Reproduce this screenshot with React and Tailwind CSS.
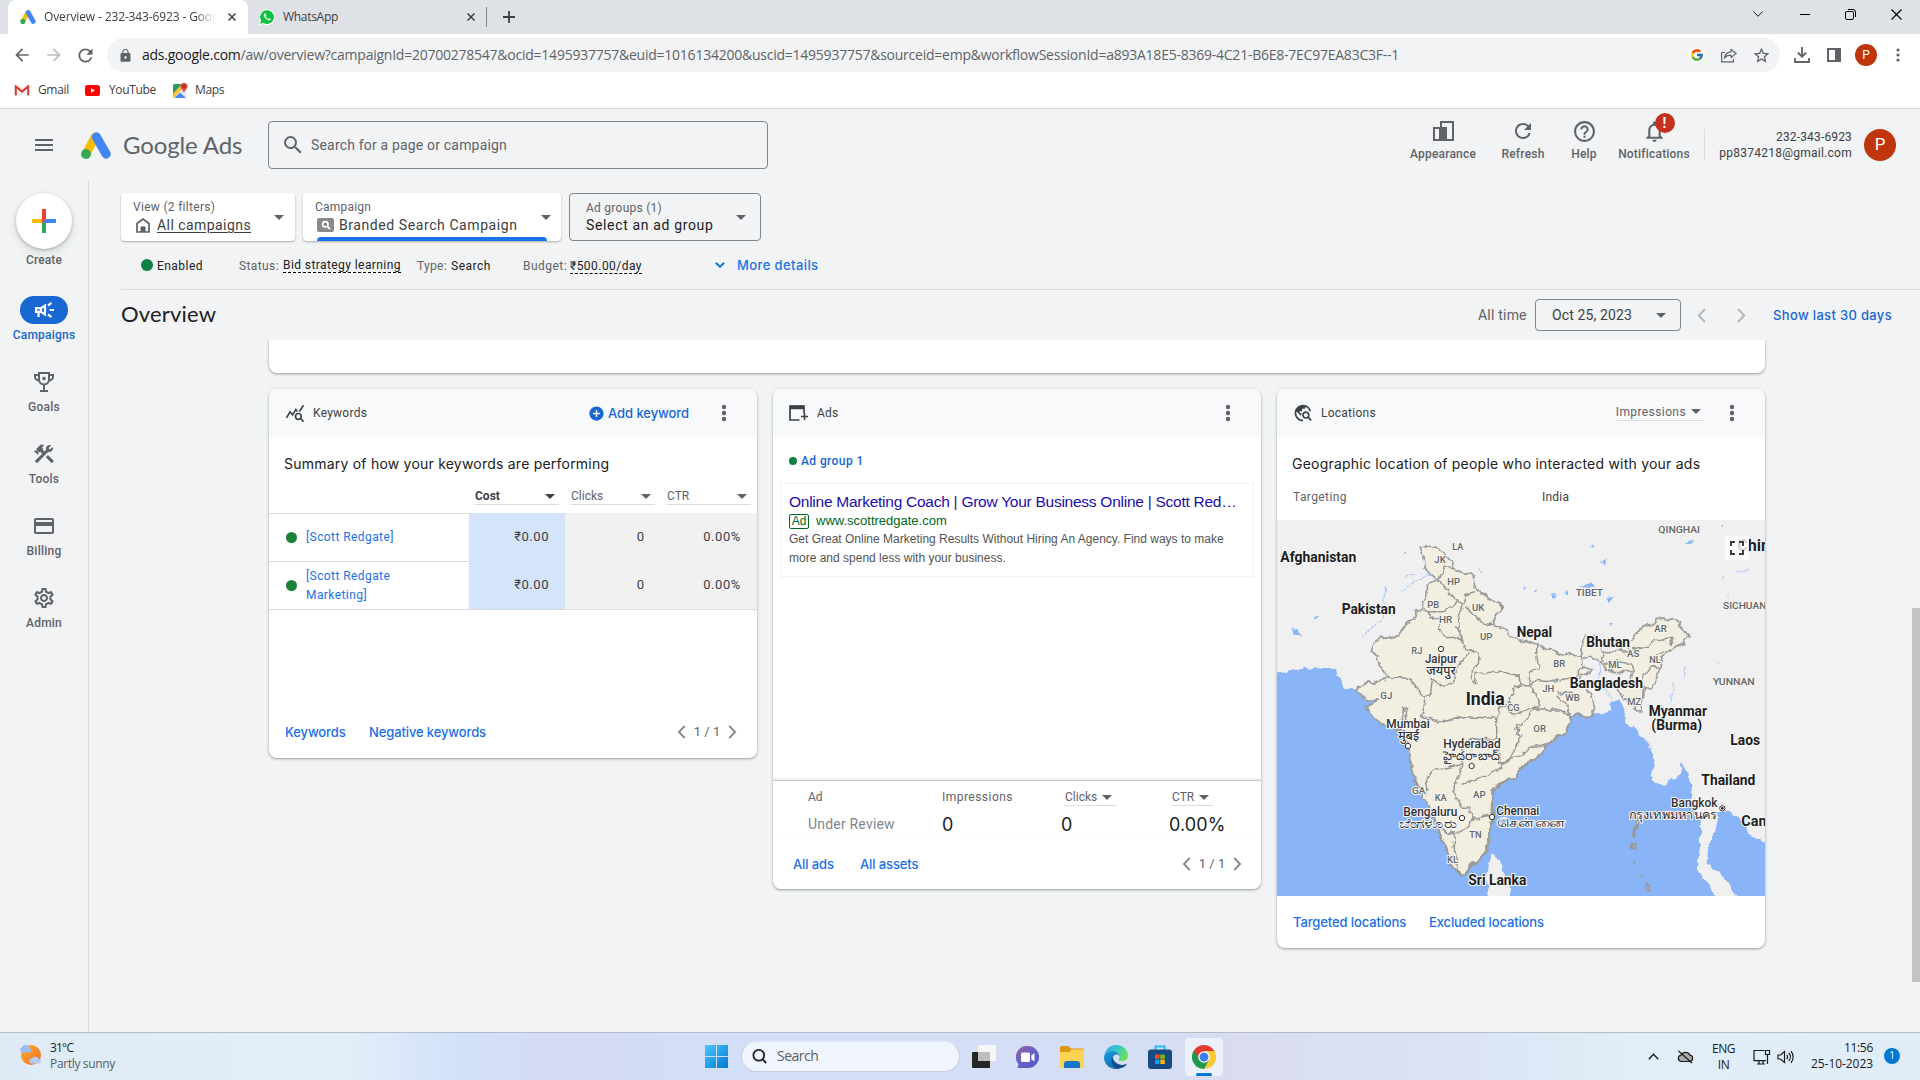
import React from 'react';
import {
  MdMenu, MdSearch, MdOutlineConstruction, MdCreditCard,
  MdOutlineSettings, MdRefresh, MdHelpOutline, MdNotificationsNone, MdQueryStats, MdTravelExplore,
  MdAddCircle, MdArrowBack, MdArrowForward, MdLock, MdStarBorder, MdFullscreen,
} from 'react-icons/md';
import { FcGoogle } from 'react-icons/fc';

const Caret = ({ className = '' }) => (
  <svg viewBox="0 0 10 5" className={`h-[5px] w-[10px] shrink-0 ${className}`}><path d="M0 0h10L5 5z" fill="currentColor" /></svg>
);

const Chevron = ({ dir, className = '' }) => (
  <svg viewBox="0 0 9 15" className={`shrink-0 ${className}`} fill="none" stroke="currentColor" strokeWidth="2">
    <path d={dir === 'left' ? 'M8 1 1.8 7.5 8 14' : 'M1 1l6.2 6.5L1 14'} />
  </svg>
);

const Dots = () => (
  <svg viewBox="0 0 6 18" className="h-[18px] w-[6px] shrink-0 text-[#5f6368]" fill="currentColor">
    <circle cx="3" cy="3" r="2.2" /><circle cx="3" cy="9" r="2.2" /><circle cx="3" cy="15" r="2.2" />
  </svg>
);

const AdsLogo = ({ className }) => (
  <svg viewBox="0 0 30 27" className={className} strokeLinecap="round">
    <path d="M5.2 21.8 14 5" stroke="#fbbc04" strokeWidth="8.6" />
    <path d="M15.4 4.9 25.1 22.1" stroke="#4285f4" strokeWidth="9.2" />
    <circle cx="5" cy="22" r="4.9" fill="#34a853" />
  </svg>
);

/* ---------- Browser chrome ---------- */

const TabClose = () => (
  <svg viewBox="0 0 8 8" className="h-2 w-2 shrink-0" stroke="#3c4043" strokeWidth="1.5"><path d="M.5.5l7 7M7.5.5l-7 7" /></svg>
);

function TabStrip() {
  return (
    <div className="flex h-[34px] shrink-0 bg-[#dee1e6] pl-2 text-xs text-[#3c4043] [font-family:'Open_Sans',sans-serif]">
      <div className="flex w-[240px] items-center rounded-t-lg bg-white pl-3">
        <AdsLogo className="h-[14px] w-4 shrink-0" />
        <span className="ml-2 w-[172px] overflow-hidden whitespace-nowrap tracking-[-0.13px] [mask-image:linear-gradient(to_right,black_88%,transparent)]">Overview - 232-343-6923 - Goog</span>
        <span className="ml-3"><TabClose /></span>
      </div>
      <div className="flex w-[238px] items-center pl-[11px]">
        <svg viewBox="0 0 16 16" className="h-4 w-4 shrink-0">
          <path d="M0 16l1.200-4.200A7.900 7.900 0 1 1 4.300 15z" fill="#fff" />
          <path d="M1.200 14.800l.9-3.200A6.900 6.900 0 1 1 4.500 14z" fill="#0fc143" />
          <path d="M5.600 4.300c-1.300.8-1.100 2.600.6 4.700 1.900 2.200 4 3.200 5.200 2.100.6-.6.5-1.100-.2-1.500-1.200-.7-1.400-.5-1.900.3-1-.3-2.100-1.300-2.600-2.500.7-.6.7-.9.3-1.900-.4-1-.8-1.300-1.400-1.200z" fill="#fff" />
        </svg>
        <span className="ml-2 w-[184px] tracking-[-0.3px]">WhatsApp</span>
        <TabClose />
      </div>
      <div className="flex h-full items-center gap-4">
        <div className="h-5 w-px bg-[#80868b]" />
        <svg viewBox="0 0 12 12" className="h-3 w-3" stroke="#3c4043" strokeWidth="1.800"><path d="M6 0v12M0 6h12" /></svg>
      </div>
      <div className="ml-auto flex h-[28px] items-center gap-[35px] pr-[18px]">
        <svg viewBox="0 0 10 6" className="h-[6px] w-[10px]" fill="none" stroke="#202124"><path d="M.5.5 5 5.300 9.500.5" /></svg>
        <div className="ml-[2px] h-px w-[10px] bg-black" />
        <svg viewBox="0 0 11 11" className="h-[11px] w-[11px]" fill="none" stroke="#000"><rect x=".5" y="2.500" width="8" height="8" rx="1.500" /><path d="M3 .5h5a2.500 2.500 0 0 1 2.500 2.500v5" /></svg>
        <svg viewBox="0 0 11 11" className="h-[11px] w-[11px]" stroke="#000" strokeWidth="1.100"><path d="M.5.5l10 10M10.500.5l-10 10" /></svg>
      </div>
    </div>
  );
}

function Toolbar() {
  return (
    <div className="flex h-[38px] shrink-0 items-center bg-white pt-1 text-[#5f6368]">
      <MdArrowBack className="ml-3 h-5 w-5 shrink-0" />
      <MdArrowForward className="ml-3 h-5 w-5 shrink-0 text-[#babcbe]" />
      <MdRefresh className="ml-[11px] h-[21px] w-[21px] shrink-0" />
      <div className="ml-[11px] flex h-[34px] w-[1673px] shrink-0 items-center rounded-full bg-[#f1f3f4] pl-[11px]">
        <MdLock className="h-[15px] w-[15px] shrink-0" />
        <div className="ml-[9px] flex-1 whitespace-nowrap text-sm tracking-[-0.24px] [font-family:'Open_Sans',sans-serif]">
          <span className="text-[#202124]">ads.google.com</span>/aw/overview?campaignId=20700278547&amp;ocid=1495937757&amp;euid=1016134200&amp;uscid=1495937757&amp;sourceid=emp&amp;workflowSessionId=a893A18E5-8369-4C21-B6E8-7EC97EA83C3F--1
        </div>
        <div className="mr-[16px] flex h-4 w-4 items-center justify-center rounded-full bg-white"><FcGoogle className="h-[14px] w-[14px]" /></div>
        <svg viewBox="0 0 16 14" className="mr-[15px] h-[15px] w-4" fill="none" stroke="currentColor" strokeWidth="1.200"><path d="M4 4H.6v9.400h11.800v-2.600M10 .9l5.200 4L10 9V6.600C6.800 6.500 5 7.500 3.300 9.700 3.800 6 6 3.700 10 3.400z" strokeLinejoin="round" /></svg>
        <MdStarBorder className="mr-[9px] h-[19px] w-[19px]" />
      </div>
      <svg viewBox="0 0 16 16" className="ml-[14px] h-4 w-4 shrink-0" fill="none" stroke="currentColor" strokeWidth="1.800"><path d="M8 0v9.500M3.800 5.500 8 9.700l4.200-4.200M1 11v4h14v-4" /></svg>
      <svg viewBox="0 0 14 14" className="ml-[17px] h-[14px] w-[14px] shrink-0"><path d="M1 1h12v12H1z" fill="none" stroke="currentColor" strokeWidth="2" /><path d="M8 1h5v12H8z" fill="currentColor" /></svg>
      <div className="ml-[14px] flex h-[22px] w-[22px] shrink-0 items-center justify-center rounded-full bg-[#bf360c] text-xs text-white">P</div>
      <svg viewBox="0 0 4 14" className="ml-[19px] h-[14px] w-1 shrink-0" fill="currentColor"><circle cx="2" cy="2" r="1.600" /><circle cx="2" cy="7" r="1.600" /><circle cx="2" cy="12" r="1.600" /></svg>
    </div>
  );
}

function Bookmarks() {
  return (
    <div className="flex h-[37px] shrink-0 items-center border-b border-[#d5d7da] bg-white pl-[14px] text-xs tracking-[-0.35px] text-[#3c4043] [font-family:'Open_Sans',sans-serif]">
      <svg viewBox="0 0 16 12" className="h-[11px] w-4"><path d="M1 11V1h14v10z" fill="#f1f1f1" /><path d="M1.200 11.500V1.500L8 7.200l6.800-5.700v10" fill="none" stroke="#d93a2f" strokeWidth="2.200" /></svg>
      <span className="ml-2 w-[47px]">Gmail</span>
      <svg viewBox="0 0 15 11" className="h-[11px] w-[15px]"><rect width="15" height="11" rx="2.600" fill="#f00" /><path d="M6 3.200v4.600l4-2.300z" fill="#fff" /></svg>
      <span className="ml-[9px] w-[63px]">YouTube</span>
      <svg viewBox="0 0 16 15" className="h-[15px] w-4"><rect x="1" y="1" width="13" height="14" rx="1.500" fill="#e8eaed" /><path d="M1 2.500A1.500 1.500 0 0 1 2.500 1H10L1 11z" fill="#2f9e53" /><path d="M1 13.500V11l8-8 2 1-9 11z" fill="#fbc116" /><path d="M2.500 15 8 9.500l6 5.500z" fill="#4a89f3" /><path d="M12 0a3.400 3.400 0 0 1 3.500 3.400C15.500 6 12.600 6.500 12 10c-.6-3.500-3.500-4-3.500-6.600A3.400 3.400 0 0 1 12 0z" fill="#e04437" /><circle cx="12" cy="3.400" r="1.200" fill="#8c1d13" /></svg>
      <span className="ml-[7px]">Maps</span>
    </div>
  );
}

/* ---------- App header ---------- */

const Action = ({ className, label, children }) => (
  <div className={`flex shrink-0 flex-col items-center text-[#5f6368] ${className}`}>
    <div className="relative flex h-[26px] items-center">{children}</div>
    <span className="mt-[2px] whitespace-nowrap text-xs font-medium leading-4 tracking-[0.2px]">{label}</span>
  </div>
);

function Header() {
  return (
    <div className="flex h-[72px] shrink-0 pl-8">
      <div className="flex w-[236px] items-center">
        <MdMenu className="h-6 w-6 text-[#5f6368]" />
        <AdsLogo className="ml-[25px] h-[27px] w-[30px]" />
        <span className="ml-[12px] whitespace-nowrap text-[24px] tracking-[-0.12px] text-[#5f6368] [font-family:'Lato',sans-serif]">Google Ads</span>
      </div>
      <div className="mt-3 flex h-12 w-[500px] items-center rounded-[4px] border border-[#80868b] pl-3">
        <MdSearch className="h-6 w-6 text-[#5f6368]" />
        <span className="ml-[6px] text-sm tracking-[0.18px] text-[#5f6368]">Search for a page or campaign</span>
      </div>
      <div className="ml-auto flex pt-[9px]">
        <Action label="Appearance" className="w-[68px]">
          <svg viewBox="0 0 21 20" className="h-5 w-[21px]"><path d="M1 7h6v12H1z" fill="none" stroke="currentColor" strokeWidth="2" /><path d="M8 1h12v18H8z" fill="none" stroke="currentColor" strokeWidth="2" /><path d="M7 6h7v13H7z" fill="currentColor" /></svg>
        </Action>
        <Action label="Refresh" className="ml-[23px] w-[46px]"><MdRefresh className="h-6 w-6" /></Action>
        <Action label="Help" className="ml-[23px] w-[30px]"><MdHelpOutline className="h-[25px] w-[25px]" /></Action>
        <Action label="Notifications" className="ml-[18px] w-[74px]">
          <MdNotificationsNone className="h-[25px] w-[25px]" />
          <span className="absolute -top-[5px] left-[13px] flex h-5 w-5 items-center justify-center rounded-full bg-[#c5311f] text-sm font-bold text-white">!</span>
        </Action>
        <div className="ml-[13px] mt-[11px] h-8 w-px bg-[#dadce0]" />
        <div className="ml-[14px] mt-[11px] w-[133px] text-right text-xs leading-4 text-[#3c4043]">
          <div className="tracking-[0.16px]">232-343-6923</div>
          <div className="whitespace-nowrap tracking-[0.26px]">pp8374218@gmail.com</div>
        </div>
        <div className="ml-[12px] mr-6 mt-[11px] flex h-8 w-8 items-center justify-center rounded-full bg-[#bf360c] text-[17px] text-white">P</div>
      </div>
    </div>
  );
}

const NavItem = ({ label, active, children }) => (
  <div className={`mb-[22px] flex flex-col items-center ${active ? 'text-[#1967d2]' : 'text-[#5f6368]'}`}>
    <div className={`flex h-7 w-12 items-center justify-center rounded-full ${active ? 'bg-[#1967d2] text-white' : ''}`}>{children}</div>
    <span className="text-xs font-medium leading-[22px] tracking-[0.22px]">{label}</span>
  </div>
);

function Sidebar() {
  return (
    <div className="w-[89px] shrink-0 border-r border-[#dadce0] pt-3">
      <div className="mb-[25px] flex flex-col items-center">
        <div className="flex h-14 w-14 items-center justify-center rounded-full bg-white shadow-[0_1px_3px_rgba(60,64,67,0.3),0_4px_8px_rgba(60,64,67,0.15)]">
          <svg viewBox="0 0 24 24" className="h-6 w-6"><path d="M10 0h4v10l-4 4z" fill="#ea4335" /><path d="M0 10h14l-4 4H0z" fill="#fbbc04" /><path d="M10 14l4-4v14h-4z" fill="#34a853" /><path d="M14 10h10v4H10z" fill="#4285f4" /><path d="M10 10h4l-4 4z" fill="#ea4335" /></svg>
        </div>
        <span className="text-xs font-medium leading-[22px] tracking-[0.12px] text-[#5f6368]">Create</span>
      </div>
      <NavItem label="Campaigns" active>
        <svg viewBox="0 0 24 24" className="h-6 w-6" fill="none" stroke="currentColor" strokeWidth="2.200"><path d="M4 10.200h5l4-2.700v9l-4-2.700H4z" /><path d="M6.500 14v5M8.800 10v4M17.500 12H22M16 7.500l3.500-2.600M16 16.500l3.500 2.600" /></svg>
      </NavItem>
      <NavItem label="Goals">
        <svg viewBox="0 0 20 20" className="h-5 w-5" fill="none" stroke="currentColor" strokeWidth="2"><path d="M5 1h10v6.500a5 5 0 0 1-10 0zM5 3H1v1.500A4 4 0 0 0 5 8.500M15 3h4v1.500a4 4 0 0 1-4 4M10 12.500V19M6 19h8" /><circle cx="10" cy="6.500" r="1.800" fill="currentColor" stroke="none" /></svg>
      </NavItem>
      <NavItem label="Tools"><MdOutlineConstruction className="h-6 w-6" /></NavItem>
      <NavItem label="Billing"><MdCreditCard className="h-6 w-6" /></NavItem>
      <NavItem label="Admin"><MdOutlineSettings className="h-6 w-6" /></NavItem>
    </div>
  );
}

/* ---------- Campaign bar ---------- */

function Selectors() {
  return (
    <div className="flex h-12 gap-2 text-[#3c4043]">
      <div className="flex w-[174px] items-center rounded-[4px] bg-white pl-3 pr-[11px] shadow-[0_1px_2px_rgba(60,64,67,0.4)]">
        <div className="flex-1">
          <div className="text-xs leading-4 tracking-[0.3px] text-[#5f6368]">View (2 filters)</div>
          <div className="flex items-center leading-5">
            <svg viewBox="0 0 14 15" className="ml-[3px] mr-[7px] h-[15px] w-[14px]" fill="none" stroke="#5f6368" strokeWidth="1.700"><path d="M1 14V5.500L7 1l6 4.500V14z" /><path d="M4.500 8.500h5V14h-5z" fill="#5f6368" stroke="none" /></svg>
            <span className="whitespace-nowrap text-sm leading-5 tracking-[0.44px] underline underline-offset-2">All campaigns</span>
          </div>
        </div>
        <Caret className="text-[#5f6368]" />
      </div>
      <div className="relative flex w-[258px] items-center rounded-[4px] bg-white pl-3 pr-[10px] shadow-[0_1px_2px_rgba(60,64,67,0.4)]">
        <div className="flex-1">
          <div className="text-xs leading-4 tracking-[0.2px] text-[#5f6368]">Campaign</div>
          <div className="flex items-center leading-5">
            <svg viewBox="0 0 17 14" className="ml-[2px] mr-[5px] h-[14px] w-[17px]" fill="none"><rect width="17" height="14" rx="2" fill="#8a8a8a" /><circle cx="8.300" cy="6.300" r="2.700" stroke="#fff" strokeWidth="1.700" /><path d="M10 8l3 3.200" stroke="#fff" strokeWidth="1.800" /></svg>
            <span className="whitespace-nowrap text-sm leading-5 tracking-[0.58px]">Branded Search Campaign</span>
          </div>
        </div>
        <Caret className="text-[#5f6368]" />
        <div className="absolute bottom-0 left-[14px] h-1 w-[230px] rounded-t bg-[#1a73e8]" />
      </div>
      <div className="flex w-[192px] items-center rounded-[4px] border border-[#80868b] pl-4 pr-[14px]">
        <div className="flex-1">
          <div className="text-xs leading-4 tracking-[0.26px] text-[#5f6368]">Ad groups (1)</div>
          <div className="whitespace-nowrap text-sm leading-[18px] tracking-[0.65px] text-[#202124]">Select an ad group</div>
        </div>
        <Caret className="text-[#5f6368]" />
      </div>
    </div>
  );
}

function StatusBar() {
  return (
    <div className="flex h-[49px] items-center whitespace-nowrap border-b border-[#dadce0] pl-5 text-xs text-[#202124]">
      <div className="h-3 w-3 rounded-full bg-[#0d8043]" />
      <span className="ml-1 w-[82px] pt-px tracking-[0.46px]">Enabled</span>
      <span className="w-[44px] pt-px tracking-[0.4px] text-[#5f6368]">Status:</span>
      <div className="w-[134px]"><span className="border-b border-dashed border-black tracking-[0.42px]">Bid strategy learning</span></div>
      <span className="w-[34px] pt-px tracking-[0.32px] text-[#5f6368]">Type:</span>
      <span className="w-[72px] pt-px tracking-[0.5px]">Search</span>
      <span className="w-[47px] pt-px tracking-[0.46px] text-[#5f6368]">Budget:</span>
      <div className="w-[145px] pt-[2px]"><span className="border-b border-dashed border-black tracking-[0.46px]">₹500.00/day</span></div>
      <svg viewBox="0 0 10 6" className="h-[6px] w-[10px]" fill="none" stroke="#1a73e8" strokeWidth="2"><path d="M.8.8 5 4.800 9.200.8" /></svg>
      <span className="ml-3 pt-[2px] text-[13px] font-medium tracking-[0.4px] text-[#1a73e8] [font-family:'Inter',sans-serif]">More details</span>
    </div>
  );
}

function TitleBar() {
  return (
    <div className="flex h-[50px] items-center whitespace-nowrap">
      <h1 className="pb-[3px] text-[22px] tracking-[0.2px] text-[#202124] [font-family:'Lato',sans-serif]">Overview</h1>
      <span className="ml-auto w-[57px] text-sm tracking-[0.2px] text-[#5f6368]">All time</span>
      <div className="flex h-8 w-[146px] items-center justify-between rounded-[4px] border border-[#80868b] pl-4 pr-[14px] text-sm tracking-[0.13px] text-[#3c4043]">Oct 25, 2023<Caret className="text-[#5f6368]" /></div>
      <Chevron dir="left" className="ml-4 h-[15px] w-[9px] text-[#b4b7ba]" />
      <Chevron dir="right" className="ml-[31px] h-[15px] w-[9px] text-[#b4b7ba]" />
      <span className="ml-[27px] mr-7 pt-[2px] text-[13px] font-medium tracking-[0.33px] text-[#1967d2] [font-family:'Inter',sans-serif]">Show last 30 days</span>
    </div>
  );
}

/* ---------- Cards ---------- */

const Card = ({ className, children }) => (
  <div className={`flex w-[488px] shrink-0 flex-col overflow-hidden rounded-lg bg-white shadow-[0_1px_2px_rgba(60,64,67,0.35),0_1px_3px_1px_rgba(60,64,67,0.12)] ${className}`}>{children}</div>
);

const CardHead = ({ icon, title, children }) => (
  <div className="flex h-12 shrink-0 items-center bg-[#f8f9fb] pl-[16px] pr-[30px]">
    <div className="flex w-[28px] text-[#3c4043]">{icon}</div>
    <span className="text-xs tracking-[0.25px] text-[#3c4043]">{title}</span>
    <div className="ml-auto flex items-center">{children}<Dots /></div>
  </div>
);

const CardTitle = ({ children }) => (
  <div className="flex h-[52px] shrink-0 items-center whitespace-nowrap pl-[15px] pt-px text-sm tracking-[0.22px] text-[#202124] [font-family:'Inter',sans-serif]">{children}</div>
);

const Link = ({ className = '', children }) => (
  <span className={`shrink-0 whitespace-nowrap pt-[2px] text-[13px] font-medium tracking-[-0.12px] text-[#1a6fe8] [font-family:'Inter',sans-serif] ${className}`}>{children}</span>
);

const Pager = () => (
  <div className="ml-auto flex items-center text-[#80868b]">
    <Chevron dir="left" className="h-[14px] w-[9px]" />
    <span className="mx-[7px] w-[28px] whitespace-nowrap text-center text-[13px] text-[#5f6368]">1 / 1</span>
    <Chevron dir="right" className="h-[14px] w-[9px]" />
  </div>
);

const HeadCell = ({ label, bold }) => (
  <div className={`flex h-4 w-[84px] items-center justify-between border-b border-[#dadce0] pr-1 text-xs ${bold ? 'font-bold text-[#3c4043]' : 'text-[#5f6368]'}`}><span className="-mt-px">{label}</span><Caret /></div>
);

const KEYWORDS = ['[Scott Redgate]', '[Scott Redgate Marketing]'];

function KeywordsCard() {
  return (
    <Card className="h-[369px]">
      <CardHead icon={<MdQueryStats className="h-5 w-5" />} title="Keywords">
        <MdAddCircle className="h-[17px] w-[17px] text-[#1967d2]" />
        <span className="ml-[3px] mr-8 pt-[2px] text-[13px] font-medium tracking-[-0.07px] text-[#1967d2] [font-family:'Inter',sans-serif]">Add keyword</span>
      </CardHead>
      <CardTitle>Summary of how your keywords are performing</CardTitle>
      <div className="flex h-6 gap-3 pl-[206px]"><HeadCell label="Cost" bold /><HeadCell label="Clicks" /><HeadCell label="CTR" /></div>
      <div className="flex flex-col border-b border-[#dadce0]">
        {KEYWORDS.map((k) => (
          <div key={k} className="flex h-12">
            <div className="flex w-[200px] items-center border-t border-[#dadce0] pl-[17px]">
              <div className="h-[11px] w-[11px] shrink-0 rounded-full bg-[#188038]" />
              <span className="ml-[9px] w-[110px] text-xs leading-[19px] tracking-[0.42px] text-[#1a73e8]">{k}</span>
            </div>
            <div className="flex w-24 items-center justify-end bg-[#d4e4fb] pb-px pr-4 text-[13px] tracking-[0.55px] text-[#3c4043]">₹0.00</div>
            <div className="flex w-24 items-center justify-end bg-[#f1f1f1] pb-px pr-[17px] text-[13px] text-[#3c4043]">0</div>
            <div className="flex w-24 items-center justify-end bg-[#f1f1f1] pb-px pr-4 text-[13px] tracking-[0.6px] text-[#3c4043]">0.00%</div>
          </div>
        ))}
      </div>
      <div className="mt-auto flex h-[52px] items-center pl-4 pr-5">
        <Link className="w-[84px]">Keywords</Link><Link>Negative keywords</Link><Pager />
      </div>
    </Card>
  );
}

function AdsCard() {
  return (
    <Card className="h-[500px]">
      <CardHead
        icon={<svg viewBox="0 0 19 16" className="h-4 w-[19px]" fill="none" stroke="currentColor"><path d="M10.500 15H1V1h14v7" strokeWidth="1.700" /><path d="M1 2.500h14" strokeWidth="3.500" /><path d="M15.500 8v7M12 11.500h7" strokeWidth="1.600" /></svg>}
        title="Ads"
      />
      <div className="flex h-[46px] items-center gap-1 pl-4 pt-[2px]">
        <div className="h-2 w-2 rounded-full bg-[#0d8043]" />
        <span className="text-xs font-medium tracking-[0.4px] text-[#1967d2]">Ad group 1</span>
      </div>
      <div className="mx-[7px] h-[94px] border border-[#f1f3f4] px-2 pt-2 [font-family:'Liberation_Sans',sans-serif]">
        <div className="whitespace-nowrap text-[15.500px] leading-5 tracking-[-0.26px] text-[#1a0dab]">Online Marketing Coach | Grow Your Business Online | Scott Red…</div>
        <div className="flex h-[18px] items-center text-[13px] text-[#006621]">
          <span className="mr-[7px] flex h-[15px] w-5 items-center justify-center rounded-[2px] border border-[#006621] text-xs">Ad</span>www.scottredgate.com
        </div>
        <div className="whitespace-nowrap text-xs leading-[19px] text-[#545454]">
          Get Great Online Marketing Results Without Hiring An Agency. Find ways to make<br />more and spend less with your business.
        </div>
      </div>
      <div className="mt-auto h-[58px] shrink-0 border-t border-[#c6c8cb] shadow-[0_-1px_2px_rgba(60,64,67,0.15)]">
        <div className="flex whitespace-nowrap pl-[35px] pt-2 text-xs text-[#5f6368]">
          <span className="w-[134px] leading-4">Ad</span>
          <span className="w-[123px] leading-4 tracking-[0.47px]">Impressions</span>
          <div className="w-[107px]"><span className="inline-flex h-[17px] items-center gap-[5px] border-b border-[#dadce0] pr-1">Clicks<Caret /></span></div>
          <span className="inline-flex h-[17px] items-center gap-[5px] border-b border-[#dadce0] pr-1">CTR<Caret /></span>
        </div>
        <div className="flex h-[36px] items-center pl-[35px] text-[18px] text-[#202124] [font-family:'Inter',sans-serif]">
          <span className="w-[134px] text-sm tracking-[0.2px] text-[#80868b] [font-family:'Roboto',sans-serif]">Under Review</span>
          <span className="w-[119px]">0</span><span className="w-[108px]">0</span><span className="tracking-[0.1px]">0.00%</span>
        </div>
      </div>
      <div className="flex h-[51px] shrink-0 items-center pl-5 pr-[19px]"><Link className="w-[67px]">All ads</Link><Link>All assets</Link><Pager /></div>
    </Card>
  );
}

/* ---------- Map ---------- */

const INDIA = 'M450 112L470 107 500 112 520 130 540 150 552 172 575 185 600 190 612 205 620 240 650 258 665 268 690 282 697 292 685 305 675 320 665 345 700 360 740 388 780 398 800 402 840 420 880 432 935 440 938 395 945 378 975 378 998 425 1040 425 1080 422 1076 400 1090 385 1120 352 1145 345 1160 327 1190 332 1215 325 1230 345 1240 362 1258 375 1240 395 1248 410 1225 403 1205 415 1185 435 1170 460 1165 490 1145 532 1120 530 1118 565 1112 603 1095 603 1085 570 1070 560 1060 568 1045 550 1045 520 1085 505 1092 485 1010 485 998 465 990 453 960 440 935 445 935 470 965 480 945 495 930 500 940 530 960 550 970 585 972 615 940 618 920 612 905 620 898 645 885 670 850 688 830 705 800 745 745 780 740 800 715 810 690 825 668 840 665 880 668 925 655 975 655 1020 625 1055 600 1062 590 1090 572 1095 545 1065 530 1020 500 950 470 880 440 820 420 750 414 710 395 660 350 650 310 620 285 590 310 583 325 570 290 570 258 540 280 520 310 518 355 505 330 470 325 435 303 425 310 400 335 378 345 388 385 380 400 350 432 325 440 300 455 295 475 245 475 220 508 208 475 190 462 165 458 135Z';

const STATES = [
  'M508 208L522 175 552 172', 'M508 208L530 240 560 275 580 282 585 255 620 248', 'M560 265L545 290 525 305 475 305 455 298',
  'M475 305L480 322 505 330 512 360 530 380 560 378 575 388', 'M580 282L565 315 568 360 580 415 600 422 628 435 625 460 612 480',
  'M555 350L575 362', 'M583 290L610 315 640 338 665 345', 'M355 505L420 508 435 530 465 560 482 548 488 505 520 530 555 518 555 485 575 450 600 422',
  'M612 480L605 510 620 520 622 490 680 485 750 500 755 530 775 530 780 490 805 470 800 435 800 402', 'M775 530L790 510 840 515 880 508 925 500 925 480 945 465',
  'M465 560L460 600 455 620 520 635 580 620 680 625 685 600 720 570 730 535 755 530', 'M780 530L810 575 800 600 830 600 870 600 905 612',
  'M865 550L890 545 920 560', 'M860 555L885 580 905 612', 'M680 625L680 685 640 690 605 685 575 705 575 770 560 820 565 822',
  'M720 570L715 600 730 620 770 600 800 590', 'M745 640L740 670 755 675 735 715 725 740 715 755 690 760 685 720',
  'M800 590L775 625 745 640', 'M575 820L640 800 680 785 710 750 740 740 780 715 830 705', 'M560 820L555 870 575 890 600 895 610 930 575 965 540 970',
  'M470 800L500 780 540 770 575 765', 'M430 810L445 830 470 850 470 800', 'M610 925L665 915', 'M500 950L550 975 550 1020 565 1060 570 1095',
  'M395 660L400 595 410 600 405 640', 'M1090 420L1130 412 1150 395 1205 385 1200 405', 'M1000 460L1040 455 1080 460 1092 485', 'M1120 530L1118 500 1140 470 1165 472', 'M1150 440L1185 425', 'M998 425L998 455',
];

const WATER = [
  'M68 358l14 2 14 18-20 0z', 'M136 320l7-4 0 12-7 0z', 'M755 232l16 4-4 4z', 'M790 245l12 0-2 8z', 'M840 256l18 0-4 8z', 'M885 250l6-4 0 8z', 'M925 230l32-6 10-8 10 12-14 6z', 'M1005 264l28-2-16 14z', 'M1245 96l22-2-6 8z', 'M1360 50l6-4-4 10z', 'M990 160l22-10-4 10z', 'M960 110l10 2-6 4z', 'M1030 68l12 2z', 'M1018 334l12 4-8 8z', 'M408 128l6-4 0 8z', 'M620 168l14 14 0 6z', 'M635 148l20 10z', 'M1372 250l6 14-4-4z', 'M1345 455l4 10-4-4z', 'M1018 612l8-36 20-8 16 30 8 20-30-10z',
];

const COUNTRIES = [
  ['Afghanistan', 31, 157, 228], ['Pakistan', 215, 312, 162], ['Nepal', 740, 381, 106], ['Bhutan', 949, 411, 131], ['Bangladesh', 899, 534, 220],
  ['Myanmar', 1136, 618, 175], ['(Burma)', 1144, 660, 152], ['Laos', 1381, 705, 89], ['Thailand', 1294, 825, 162], ['Cambodia', 1414, 948, 196], ['Sri Lanka', 595, 1125, 174],
];

const REGIONS = [
  ['QINGHAI', 1165, 70, 125], ['LA', 547, 121, 33], ['JK', 493, 160, 34], ['HP', 532, 225, 38], ['PB', 472, 295, 36], ['UK', 606, 304, 37], ['HR', 507, 339, 40],
  ['UP', 630, 390, 37], ['RJ', 424, 432, 33], ['BR', 850, 471, 36], ['JH', 817, 547, 36], ['WB', 886, 573, 43], ['GJ', 331, 568, 36], ['CG', 712, 603, 37],
  ['TIBET', 917, 258, 82], ['SICHUAN', 1359, 297, 130], ['YUNNAN', 1329, 525, 125], ['AR', 1153, 367, 37], ['AS', 1071, 441, 37], ['ML', 1015, 474, 40],
  ['NL', 1138, 459, 34], ['MZ', 1072, 585, 42], ['OR', 790, 666, 38], ['GA', 426, 852, 40], ['KA', 494, 873, 36], ['AP', 609, 865, 38], ['TN', 598, 984, 37], ['KL', 531, 1059, 33],
];

const CITIES = [
  ['Jaipur', 465, 458, 97], ['जयपुर', 469, 494, 88], ['Mumbai', 349, 655, 130], ['मुंबई', 385, 690, 62], ['Hyderabad', 520, 715, 172], ['హైదరాబాద్', 518, 750, 174],
  ['Bengaluru', 400, 918, 162], ['ಬೆಂಗಳೂರು', 387, 954, 174], ['Chennai', 679, 915, 129], ['சென்னை', 680, 950, 207], ['Bangkok', 1203, 892, 139], ['กรุงเทพมหานคร', 1076, 928, 266],
];

const PINS = [[513, 417], [414, 708], [605, 768], [576, 924], [666, 921], [1357, 895]];

const Labels = ({ items, size, weight, fill, halo }) => items.map(([t, x, y, w]) => (
  <text key={t} x={x} y={y} textLength={w} lengthAdjust="spacingAndGlyphs" fontSize={size} fontWeight={weight} fill={fill} stroke={halo} strokeWidth="6" strokeLinejoin="round" paintOrder="stroke">{t}</text>
));

function IndiaMap() {
  return (
    <svg viewBox="21 30 1464 1128" className="h-full w-full [font-family:Roboto,'Noto_Sans',sans-serif]">
      <defs>
        <filter id="coast" x="0" y="0" width="100%" height="100%">
          <feTurbulence type="fractalNoise" baseFrequency="0.035" numOctaves="3" seed="4" />
          <feDisplacementMap in="SourceGraphic" scale="22" xChannelSelector="R" yChannelSelector="G" />
        </filter>
      </defs>
      <rect x="0" y="0" width="1520" height="1200" fill="#f0f0f0" />
      <g filter="url(#coast)">
        <path d="M0 490L100 476 195 473 205 500 225 530 258 540 500 620 940 610 1000 605 1025 600 1040 580 1052 578 1070 630 1100 665 1125 690 1150 725 1155 760 1142 810 1180 825 1235 790 1233 755 1250 790 1265 830 1268 880 1290 930 1290 1010 1280 1080 1320 1125 1350 1180 0 1180Z" fill="#8ab4f8" />
        <path d="M1415 1180L1385 1130 1345 1085 1310 1060 1315 1010 1340 960 1340 905 1375 900 1400 920 1450 980 1500 1005V1180Z" fill="#8ab4f8" />
        <path d="M660 1035L690 1055 710 1100 722 1140 715 1180 660 1180 650 1120 655 1070Z" fill="#f0f0f0" />
        <path d={INDIA} fill="#f2efe1" stroke="#9b9b9b" strokeWidth="5" strokeLinejoin="round" />
        <path d="M972 615L940 618 920 612 905 620 898 645 885 670 850 688 830 705 800 745 745 780 740 800 715 810 690 825 668 840 665 880 668 925 655 975 655 1020 625 1055 600 1062 590 1090 572 1095 545 1065 530 1020 500 950" fill="none" stroke="#9b9b9b" strokeWidth="7" />
        {STATES.map((d) => <path key={d} d={d} fill="none" stroke="#959595" strokeWidth="4.500" />)}
        {WATER.map((d) => <path key={d} d={d} fill="#8ab4f8" />)}
        <path d="M344 230l-4 90-30 30-35 35M395 243l40-30 50-20M396 206l40-16M985 450l5 45 20 50 20 35M1250 470l-10 30M1210 520l-8 70M1400 185l20 0 20-4M1355 210l8-6" fill="none" stroke="#a9c8fa" strokeWidth="3" />
        <path d="M1098 925l8 4-4 26-8 6zM1092 955l6 4-2 22-6 0zM1085 1002l8 0 0 10-8 0zM1092 1058l10 0M1108 1090l6 4M1116 1100l6 2M1130 1122l8 4 0 14-8-4z" fill="#ddd" stroke="#999" strokeWidth="6" />
      </g>
      <Labels items={REGIONS} size="27" weight="500" fill="#63666b" halo="#f5f4ee" />
      <Labels items={COUNTRIES} size="43" weight="700" fill="#1c1d20" halo="#f8f8f8" />
      <Labels items={[['India', 587, 585, 117]]} size="56" weight="700" fill="#1c1d20" halo="#f8f8f8" />
      <Labels items={[['China', 1402, 123, 124]]} size="47" weight="700" fill="#1c1d20" halo="#f8f8f8" />
      <Labels items={CITIES} size="37" weight="500" fill="#303236" halo="#f8f8f8" />
      {PINS.map(([x, y]) => <circle key={x} cx={x} cy={y} r="8" fill="#fff" stroke="#333" strokeWidth="3" />)}
      <circle cx="1357" cy="895" r="4" fill="#222" />
    </svg>
  );
}

function LocationsCard() {
  return (
    <Card className="h-[559px]">
      <CardHead icon={<MdTravelExplore className="h-5 w-5" />} title="Locations">
        <span className="mb-[2px] mr-6 flex h-[18px] items-center gap-[5px] border-b border-[#dadce0] pr-1 text-xs tracking-[0.4px] text-[#5f6368]">Impressions<Caret /></span>
      </CardHead>
      <CardTitle>Geographic location of people who interacted with your ads</CardTitle>
      <div className="flex h-[31px] shrink-0 pl-4 text-xs leading-4 tracking-[0.4px] text-[#5f6368]"><span className="w-[249px]">Targeting</span><span className="tracking-[0.2px] text-[#3c4043]">India</span></div>
      <div className="relative h-[376px] shrink-0">
        <IndiaMap />
        <div className="absolute left-[448px] top-4 flex h-6 w-6 items-center justify-center bg-white/80"><MdFullscreen className="h-6 w-6 text-[#3c4043]" /></div>
      </div>
      <div className="flex flex-1 items-center pl-4"><Link className="w-[136px]">Targeted locations</Link><Link>Excluded locations</Link></div>
    </Card>
  );
}

/* ---------- Taskbar ---------- */

function Taskbar() {
  return (
    <div className="flex h-12 shrink-0 items-center whitespace-nowrap border-t border-[#b3bcc9] bg-[linear-gradient(90deg,#deebf6_0%,#e2eef8_18%,#d2e1fa_24%,#d6daf4_29%,#d3dff7_38%,#d4def5_60%,#d9dcef_64%,#dbe3f3_75%,#e1edf8_85%,#e0edf8_100%)] text-xs [font-family:'Open_Sans',sans-serif]">
      <svg viewBox="0 0 24 24" className="-mt-[3px] ml-[18px] h-6 w-6 shrink-0">
        <defs><linearGradient id="sun" x1="0" y1="0" x2="1" y2="1"><stop offset="0" stopColor="#f9b233" /><stop offset="1" stopColor="#f06a1d" /></linearGradient></defs>
        <circle cx="13" cy="12" r="10" fill="url(#sun)" />
        <path d="M4 9.500a3 3 0 0 1 0-5.500 4 4 0 0 1 7.500 1 2.400 2.400 0 0 1 .5 4.500z" fill="#9fbcf0" />
        <path d="M13.500 20.500a2.500 2.500 0 0 1 .5-5 3.800 3.800 0 0 1 7 .5 2.300 2.300 0 0 1 0 4.500z" fill="#b4ccf5" />
      </svg>
      <div className="ml-2 w-[647px] pb-px leading-4">
        <div className="tracking-[-0.8px] text-[#1b1b1b]">31°C</div>
        <div className="tracking-[-0.34px] text-[#555f68]">Partly sunny</div>
      </div>
      <svg viewBox="0 0 23 23" className="ml-2 h-[23px] w-[23px] shrink-0">
        <defs><linearGradient id="win" x1="0" y1="0" x2="1" y2="1"><stop offset="0" stopColor="#4cc8fb" /><stop offset="1" stopColor="#0078d4" /></linearGradient></defs>
        <path d="M0 0h11v11H0zM12 0h11v11H12zM0 12h11v11H0zM12 12h11v11H12z" fill="url(#win)" />
      </svg>
      <div className="ml-[13px] flex h-[31px] w-[219px] items-center rounded-full border border-[#c5cfe3] border-t-[#dfe6f4] bg-[#f0f5fd] pl-[10px]">
        <svg viewBox="0 0 15 15" className="h-[15px] w-[15px]" fill="none" stroke="#222" strokeWidth="1.800"><circle cx="6.800" cy="6.300" r="5.400" /><path d="M10.500 10.200 14.200 14" /></svg>
        <span className="ml-[10px] pb-px text-sm tracking-[-0.5px] text-[#585e66]">Search</span>
      </div>
      <svg viewBox="0 0 24 23" className="ml-[12px] h-[23px] w-6"><rect y="7" width="18" height="16" rx="1" fill="#262626" /><rect x="6" y="0" width="18" height="16" rx="1" fill="#f6f6f6" /><path d="M6 7h12v9H6z" fill="#bdbdbd" /></svg>
      <svg viewBox="0 0 24 24" className="ml-5 h-6 w-6">
        <defs><linearGradient id="chat" x1="0" y1="0" x2="1" y2="1"><stop offset="0" stopColor="#9a5f9f" /><stop offset=".5" stopColor="#6562cc" /><stop offset="1" stopColor="#4f56c4" /></linearGradient></defs>
        <path d="M12 1a11 11 0 1 1 0 22H1.500l1-4A11 11 0 0 1 12 1z" fill="url(#chat)" /><rect x="5" y="7.500" width="9" height="9.500" rx="1.500" fill="#fff" /><path d="M15.300 10.500l3.200-2.500v8.500l-3.200-2.500z" fill="#fff" />
      </svg>
      <svg viewBox="0 0 24 22" className="ml-5 h-[22px] w-6"><path d="M0 1.500A1.500 1.500 0 0 1 1.500 0H8l3 2.500h11.500A1.500 1.500 0 0 1 24 4v4H0z" fill="#d99a10" /><path d="M0 6h9l2.500-2.500H24V21a1 1 0 0 1-1 1H1a1 1 0 0 1-1-1z" fill="#fcd253" /><path d="M4 22v-4a3 3 0 0 1 3-3h10a3 3 0 0 1 3 3v4z" fill="#1576c8" /></svg>
      <svg viewBox="0 0 24 24" className="ml-5 h-6 w-6">
        <defs>
          <linearGradient id="edgeA" x1="0" y1="0" x2="1" y2=".4"><stop offset="0" stopColor="#2ba7e6" /><stop offset=".6" stopColor="#3bcbc0" /><stop offset="1" stopColor="#6ae058" /></linearGradient>
          <linearGradient id="edgeB" x1="0" y1="0" x2="1" y2="1"><stop offset="0" stopColor="#1a9be0" /><stop offset="1" stopColor="#0c59a4" /></linearGradient>
        </defs>
        <path d="M.5 10C1.500 4 6.500 0 12 0c7 0 12 5 12 10.500 0 3.500-2.700 5.500-6 5.500-2.500 0-3.500-.8-3.500-1.500 0-.8 1-1 1-3C15.500 9 13 6.500 9.500 6.500 5 6.500 1.500 8.500.5 12z" fill="url(#edgeA)" />
        <path d="M0 12.500C.5 8.500 4.500 6 9 6.300c4 .2 6.500 2.700 6.500 5-1-1.800-3-2.300-4.500-1.500-3 1.500-3.500 7 2.500 9.700 3 1.200 6.500.8 8.500-.5.5-.3.800.1.500.6C20.500 22.500 16.500 24 12 24 5 24 0 18.500 0 12.500z" fill="url(#edgeB)" />
        <path d="M8.500 12c-3 5.500 1 10.500 5.500 11.800 3.500-.5 6.700-2.200 8.500-4.700-4 1.500-8 1-10.800-1.500C9.900 16 9 14.300 8.500 12z" fill="#114a8b" />
      </svg>
      <svg viewBox="0 0 24 24" className="ml-5 h-6 w-6">
        <path d="M7.500 6V1.500h9V6" fill="none" stroke="#2cb8f2" strokeWidth="2" /><rect x="0" y="4.500" width="24" height="19.500" rx="3" fill="#164a85" />
        <path d="M7 9.500h4.500v4.300H7z" fill="#f25022" /><path d="M12.300 9.500h4.500v4.300h-4.500z" fill="#7fba00" /><path d="M7 14.600h4.500V19H7z" fill="#00a4ef" /><path d="M12.300 14.600h4.500V19h-4.500z" fill="#ffb900" />
      </svg>
      <div className="ml-[13px] flex h-[38px] w-[38px] flex-col items-center justify-between rounded-[4px] bg-[#ebf0fb] pt-[7px]">
        <svg viewBox="0 0 24 24" className="h-6 w-6">
          <path d="M12 12 1.600 6A12 12 0 0 1 22.400 6z" fill="#e33b2e" /><path d="M12 12 22.400 6A12 12 0 0 1 12 24z" fill="#fcc934" /><path d="M12 12v12A12 12 0 0 1 1.600 6z" fill="#1e9b4c" />
          <path d="M12 6h10.400l-3 7z" fill="#fcc934" /><path d="M1.600 6 7 15l5-9z" fill="#e33b2e" /><path d="M7 15 1.600 6 12 18l5-3-5 9z" fill="#1e9b4c" />
          <circle cx="12" cy="12" r="5.800" fill="#fff" /><circle cx="12" cy="12" r="4.500" fill="#3a80f0" />
        </svg>
        <div className="h-[3px] w-4 rounded-full bg-[#0078d4]" />
      </div>
      <div className="ml-auto flex items-center pr-5 text-[#1b1b1b]">
        <svg viewBox="0 0 11 7" className="h-[7px] w-[11px]" fill="none" stroke="currentColor" strokeWidth="1.400"><path d="M.8 6.200 5.500 1.300l4.700 4.900" /></svg>
        <svg viewBox="0 0 17 14" className="ml-[18px] h-[14px] w-[17px]" fill="#aaa" stroke="currentColor" strokeWidth="1.200"><path d="M4 11.500a3.200 3.200 0 0 1 0-6.300 5 5 0 0 1 9 0 3.200 3.200 0 0 1 0 6.300z" /><path d="M1.500 1 15 13" /></svg>
        <div className="ml-[16px] w-[27px] text-center leading-4 tracking-[-0.4px]"><div>ENG</div><div>IN</div></div>
        <svg viewBox="0 0 18 16" className="ml-4 h-4 w-[18px]" fill="none" stroke="currentColor" strokeWidth="1.200"><path d="M11.500 1.500H1v10.200h12M4 15h8M6 12v3M10 12v3M12.500 1.500h4v4h-4zM14.500 5.500V15" /></svg>
        <svg viewBox="0 0 18 14" className="ml-[6px] h-[14px] w-[18px]" fill="none" stroke="currentColor" strokeWidth="1.200"><path d="M1 5v4h2.500L7.500 12.500v-11L3.500 5zM9.700 5a3 3 0 0 1 0 4M11.800 3a6 6 0 0 1 0 8M14 1.200a9 9 0 0 1 0 11.600" /></svg>
        <div className="ml-4 w-[62px] pb-px text-right leading-4"><div className="tracking-[-0.3px]">11:56</div><div className="tracking-[-0.06px]">25-10-2023</div></div>
        <div className="-mt-[2px] ml-[11px] flex h-4 w-4 items-center justify-center rounded-full bg-[#0078d4] text-[10px] text-white">1</div>
      </div>
    </div>
  );
}

export default function App() {
  return (
    <div className="flex h-[1080px] w-[1920px] flex-col overflow-hidden bg-[#f1f3f4] [font-family:'Roboto',sans-serif]">
      <TabStrip />
      <Toolbar />
      <Bookmarks />
      <Header />
      <div className="flex min-h-0 flex-1">
        <Sidebar />
        <div className="flex min-w-0 flex-1 flex-col pl-8 pt-3">
          <Selectors />
          <StatusBar />
          <TitleBar />
          <div className="flex min-h-0 flex-1 justify-between overflow-hidden pl-[148px]">
            <div className="flex flex-col gap-4">
              <div className="h-[33px] w-[1496px] shrink-0 rounded-b-lg bg-white shadow-[0_1px_2px_rgba(60,64,67,0.35),0_1px_3px_1px_rgba(60,64,67,0.12)]" />
              <div className="flex items-start gap-4">
                <KeywordsCard />
                <AdsCard />
                <LocationsCard />
              </div>
            </div>
            <div className="mt-[268px] h-[374px] w-2 bg-[#c1c3c5]" />
          </div>
        </div>
      </div>
      <Taskbar />
    </div>
  );
}
